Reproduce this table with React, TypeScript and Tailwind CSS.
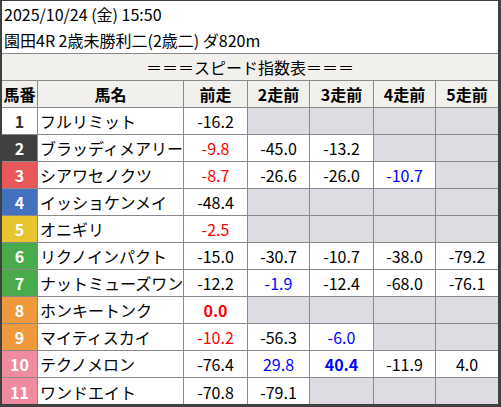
import * as React from 'react';

type Val = { v: string; c?: 'red' | 'blue'; b?: boolean } | null;

interface Horse {
  no: number;
  name: string;
  bg: string;
  fg: string;
  vals: Val[];
}

const horses: Horse[] = [
  { no: 1, name: 'フルリミット', bg: 'bg-white', fg: 'text-[#333]', vals: [{ v: '-16.2' }, null, null, null, null] },
  { no: 2, name: 'ブラッディメアリー', bg: 'bg-[#404040]', fg: 'text-white', vals: [{ v: '-9.8', c: 'red' }, { v: '-45.0' }, { v: '-13.2' }, null, null] },
  { no: 3, name: 'シアワセノクツ', bg: 'bg-[#e8585a]', fg: 'text-white', vals: [{ v: '-8.7', c: 'red' }, { v: '-26.6' }, { v: '-26.0' }, { v: '-10.7', c: 'blue' }, null] },
  { no: 4, name: 'イッショケンメイ', bg: 'bg-[#4470c0]', fg: 'text-white', vals: [{ v: '-48.4' }, null, null, null, null] },
  { no: 5, name: 'オニギリ', bg: 'bg-[#e8c430]', fg: 'text-white', vals: [{ v: '-2.5', c: 'red' }, null, null, null, null] },
  { no: 6, name: 'リクノインパクト', bg: 'bg-[#48ac4c]', fg: 'text-white', vals: [{ v: '-15.0' }, { v: '-30.7' }, { v: '-10.7' }, { v: '-38.0' }, { v: '-79.2' }] },
  { no: 7, name: 'ナットミューズワン', bg: 'bg-[#48ac4c]', fg: 'text-white', vals: [{ v: '-12.2' }, { v: '-1.9', c: 'blue' }, { v: '-12.4' }, { v: '-68.0' }, { v: '-76.1' }] },
  { no: 8, name: 'ホンキートンク', bg: 'bg-[#f0983c]', fg: 'text-white', vals: [{ v: '0.0', c: 'red', b: true }, null, null, null, null] },
  { no: 9, name: 'マイティスカイ', bg: 'bg-[#f0983c]', fg: 'text-white', vals: [{ v: '-10.2', c: 'red' }, { v: '-56.3' }, { v: '-6.0', c: 'blue' }, null, null] },
  { no: 10, name: 'テクノメロン', bg: 'bg-[#f08a9e]', fg: 'text-white', vals: [{ v: '-76.4' }, { v: '29.8', c: 'blue' }, { v: '40.4', c: 'blue', b: true }, { v: '-11.9' }, { v: '4.0' }] },
  { no: 11, name: 'ワンドエイト', bg: 'bg-[#f08a9e]', fg: 'text-white', vals: [{ v: '-70.8' }, { v: '-79.1' }, null, null, null] },
];

const widths = ['w-[64px]', 'w-[62px]', 'w-[64px]', 'w-[62px]', 'flex-1'];

function ValCell({ val, w, last }: { val: Val; w: string; last: boolean }) {
  const base = `${w} flex items-center justify-center ${last ? '' : 'border-r border-[#8a8a8a]'}`;
  if (!val) return <div className={`${base} bg-[#dcdde2]`} />;
  const color = val.c === 'red' ? 'text-[#ff0000]' : val.c === 'blue' ? 'text-[#0000ff]' : 'text-black';
  return <div className={`${base} bg-white ${color} ${val.b ? 'font-bold' : ''}`}>{val.v}</div>;
}

export default function App() {
  return (
    <div
      className="w-[501px] h-[407px] bg-white border-l-2 border-t border-r-[3px] border-b-[3px] border-[#404040] text-[16px] text-black overflow-hidden"
      style={{ fontFamily: '"Noto Sans CJK JP", "Noto Sans", sans-serif' }}
    >
      <div className="h-[53px] border-b border-[#8a8a8a] px-[2px] leading-[26px]">
        <div>2025/10/24 (金) 15:50</div>
        <div>園田4R 2歳未勝利二(2歳二) ダ820m</div>
      </div>
      <div className="h-[27px] border-b border-[#8a8a8a] bg-[#f2f0ec] flex items-center justify-center">
        ＝＝＝スピード指数表＝＝＝
      </div>
      <div className="h-[27px] border-b border-[#8a8a8a] bg-[#f2f0ec] flex font-bold">
        <div className="w-[36px] border-r border-[#8a8a8a] flex items-center justify-center">馬番</div>
        <div className="w-[146px] border-r border-[#8a8a8a] flex items-center justify-center">馬名</div>
        {['前走', '2走前', '3走前', '4走前', '5走前'].map((h, i) => (
          <div key={h} className={`${widths[i]} ${i < 4 ? 'border-r border-[#8a8a8a]' : ''} flex items-center justify-center`}>
            {h}
          </div>
        ))}
      </div>
      {horses.map((h, idx) => (
        <div key={h.no} className={`h-[27px] flex ${idx < horses.length - 1 ? 'border-b border-[#8a8a8a]' : ''}`}>
          <div className={`w-[36px] border-r border-[#8a8a8a] flex items-center justify-center font-bold ${h.bg} ${h.fg}`}>
            {h.no}
          </div>
          <div className="w-[146px] border-r border-[#8a8a8a] flex items-center pl-[2px] whitespace-nowrap overflow-hidden">
            {h.name}
          </div>
          {h.vals.map((v, i) => (
            <ValCell key={i} val={v} w={widths[i]} last={i === 4} />
          ))}
        </div>
      ))}
    </div>
  );
}
